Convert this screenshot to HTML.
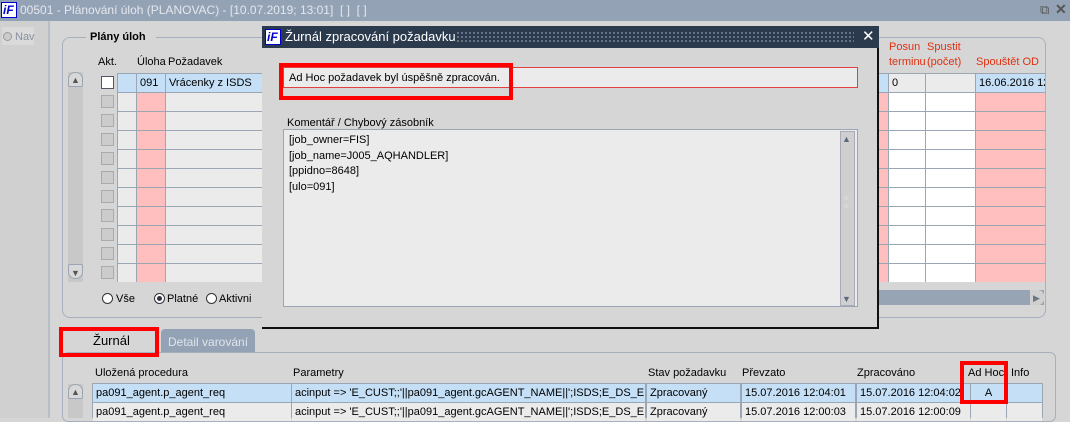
<!DOCTYPE html>
<html><head><meta charset="utf-8">
<style>
*{box-sizing:border-box;margin:0;padding:0}
body{width:1070px;height:418px;overflow:hidden;background:#d6d6d6;font-family:"Liberation Sans",Arial,sans-serif;font-size:11px;color:#000;position:relative}
.a{position:absolute}
.t{position:absolute;white-space:nowrap;line-height:14px}
.c{position:absolute;height:18px;line-height:18px;padding-left:3px;white-space:nowrap;overflow:hidden}
.row{position:absolute;left:117px;width:928px;height:19px;background:#9aa6b4}
.sb{position:absolute;width:15px;height:15px;border:1px solid #9aa6b4;border-radius:7px 7px 2px 2px;background:#d8d8d8}
.red{position:absolute;border:4px solid #f00}
</style></head><body>
<div class="a" style="left:0;top:0;width:1070px;height:21px;background:#93a2b5"></div>
<div class="a" style="left:1px;top:2px;width:16px;height:16px;background:#fff;border:1px solid #00c"><div class="t" style="left:1px;top:0;color:#00c;font-weight:bold;font-style:italic;font-size:12px">iF</div></div>
<div class="t" style="left:20px;top:3px;color:#e4e8ee;font-size:12px">00501 - Plánování úloh (PLANOVAC) - [10.07.2019; 13:01]&nbsp; [ ]&nbsp; [ ]</div>
<div class="t" style="left:1040px;top:3px;color:#555;font-size:13px">⧉</div>
<div class="t" style="left:1055px;top:2px;color:#555;font-size:14px;font-weight:bold">✕</div>
<div class="a" style="left:0;top:21px;width:50px;height:397px;background:#d0d0d0;border-right:2px solid #b8bec6"></div>
<div class="a" style="left:2px;top:27px;width:32px;height:18px;background:#dadada"></div>
<div class="a" style="left:3px;top:32px;width:9px;height:9px;border:1px solid #999;border-radius:50%;background:#ccc"></div>
<div class="t" style="left:15px;top:30px;color:#8890a0">Nav</div>
<div class="a" style="left:62px;top:37px;width:984px;height:281px;border:1px solid #a7b1bd;border-radius:8px"></div>
<div class="a" style="left:86px;top:30px;width:70px;height:14px;background:#d6d6d6"></div>
<div class="t" style="left:90px;top:30px;font-weight:bold">Plány úloh</div>
<div class="t" style="left:98px;top:55px">Akt.</div>
<div class="t" style="left:137px;top:55px">Úloha</div>
<div class="t" style="left:168px;top:55px">Požadavek</div>
<div class="t" style="left:889px;top:40px;color:#e03010">Posun</div>
<div class="t" style="left:927px;top:40px;color:#e03010">Spustit</div>
<div class="t" style="left:889px;top:55px;color:#e03010">terminu</div>
<div class="t" style="left:927px;top:55px;color:#e03010">(počet)</div>
<div class="t" style="left:976px;top:55px;color:#e03010">Spouštět OD</div>
<div class="a" style="left:68px;top:72px;width:15px;height:210px;background:#c8c8c8"></div>
<div class="sb" style="left:68px;top:72px"></div><div class="t" style="left:71px;top:73px;font-size:9px;color:#555">▲</div>
<div class="sb" style="left:68px;top:264px;border-radius:2px 2px 7px 7px"></div><div class="t" style="left:71px;top:266px;font-size:9px;color:#555">▼</div>
<div id="rows"></div>
<script>
var h='';
for(var i=0;i<11;i++){var y=73+i*19;var f=i==0;
h+='<div class="a" style="left:101px;top:'+(y+3)+'px;width:13px;height:13px;border:1px solid '+(f?'#556':'#aaa')+';background:'+(f?'#fff':'#ccc')+'"></div>';
h+='<div class="row" style="top:'+y+'px"></div>';
var cols=[[118,18,f?'#c4dff6':'#ebebeb',''],[137,28,f?'#c4dff6':'#ffbfbf',f?'091':''],[166,710,f?'#c4dff6':'#ebebeb',f?'Vrácenky z ISDS':''],[877,11,f?'#c4dff6':'#ffbfbf',''],[889,36,f?'#ebebeb':'#fff',f?'0':''],[926,49,f?'#ebebeb':'#fff',''],[976,69,f?'#c4dff6':'#ffbfbf',f?'16.06.2016 12:':'']];
for(var j=0;j<cols.length;j++){var c=cols[j];h+='<div class="c" style="left:'+c[0]+'px;top:'+(y+1)+'px;width:'+c[1]+'px;background:'+c[2]+'">'+c[3]+'</div>';}
}
document.getElementById('rows').innerHTML=h;
</script>
<div class="a" style="left:878px;top:290px;width:166px;height:15px;background:#96a4b4"></div>
<div class="a" style="left:1030px;top:290px;width:14px;height:15px;background:#d0d0d0;border-radius:0 6px 6px 0"></div>
<div class="t" style="left:1033px;top:291px;font-size:9px;color:#6a7888">▶</div>
<div class="a" style="left:102px;top:293px;width:11px;height:11px;border:1px solid #333;border-radius:50%;background:#fff"></div>
<div class="t" style="left:116px;top:292px">Vše</div>
<div class="a" style="left:154px;top:293px;width:11px;height:11px;border:1px solid #333;border-radius:50%;background:#fff"><div class="a" style="left:2px;top:2px;width:5px;height:5px;border-radius:50%;background:#334"></div></div>
<div class="t" style="left:167px;top:292px">Platné</div>
<div class="a" style="left:206px;top:293px;width:11px;height:11px;border:1px solid #333;border-radius:50%;background:#fff"></div>
<div class="t" style="left:219px;top:292px">Aktivni</div>
<div class="a" style="left:262px;top:26px;width:617px;height:303px;background:#d6d6d6;border-right:2px solid #111;border-bottom:2px solid #111"></div>
<div class="a" style="left:262px;top:26px;width:617px;height:22px;background:#2b3a4d"></div>
<div class="a" style="left:456px;top:31px;width:398px;height:12px;background-image:radial-gradient(#7a8696 0.8px,transparent 1px);background-size:4px 4px"></div>
<div class="a" style="left:265px;top:29px;width:16px;height:16px;background:#fff;border:1px solid #00c"><div class="t" style="left:1px;top:0;color:#00c;font-weight:bold;font-style:italic;font-size:12px">iF</div></div>
<div class="t" style="left:285px;top:29px;color:#fff;font-size:13px;line-height:16px">Žurnál zpracování požadavku</div>
<div class="t" style="left:862px;top:29px;color:#fff;font-size:15px;line-height:16px">✕</div>
<div class="a" style="left:283px;top:67px;width:575px;height:21px;border:1px solid #e04040;background:#ebebeb"></div>
<div class="t" style="left:289px;top:71px">Ad Hoc požadavek byl úspěšně zpracován.</div>
<div class="red" style="left:279px;top:63px;width:234px;height:37px"></div>
<div class="t" style="left:287px;top:116px">Komentář / Chybový zásobník</div>
<div class="a" style="left:283px;top:129px;width:575px;height:178px;border:1px solid #9aa6b4;background:#ebebeb"></div>
<div class="t" style="left:289px;top:133px;line-height:15.5px">[job_owner=FIS]<br>[job_name=J005_AQHANDLER]<br>[ppidno=8648]<br>[ulo=091]</div>
<div class="a" style="left:840px;top:131px;width:15px;height:175px;background:#cfcfcf;border:1px solid #aab"></div>
<div class="t" style="left:842px;top:132px;font-size:9px;color:#5a6a7e">▲</div>
<div class="t" style="left:842px;top:292px;font-size:9px;color:#5a6a7e">▼</div>
<div class="t" style="left:843px;top:195px;font-size:8px;color:#fff;line-height:8px">⁘<br>⁘</div>
<div class="a" style="left:62px;top:352px;width:994px;height:70px;border:1px solid #a7b1bd;border-radius:6px"></div>
<div class="a" style="left:161px;top:329px;width:94px;height:23px;background:#93a2b5;border-radius:4px 4px 0 0"></div>
<div class="t" style="left:168px;top:335px;color:#e0e4ea;font-size:12px">Detail varování</div>
<div class="t" style="left:93px;top:334px;font-size:13px">Žurnál</div>
<div class="red" style="left:59px;top:327px;width:100px;height:30px"></div>
<div class="t" style="left:95px;top:366px">Uložená procedura</div>
<div class="t" style="left:293px;top:366px">Parametry</div>
<div class="t" style="left:648px;top:366px">Stav požadavku</div>
<div class="t" style="left:742px;top:366px">Převzato</div>
<div class="t" style="left:857px;top:366px">Zpracováno</div>
<div class="t" style="left:968px;top:366px">Ad Hoc</div>
<div class="t" style="left:1011px;top:366px">Info</div>
<div class="a" style="left:68px;top:384px;width:15px;height:34px;background:#c8c8c8"></div>
<div class="sb" style="left:68px;top:384px"></div><div class="t" style="left:71px;top:385px;font-size:9px;color:#555">▲</div>
<div class="a" style="left:92px;top:383px;width:951px;height:35px;background:#9aa6b4"></div>
<div class="c" style="left:93px;top:384px;width:198px;background:#c4dff6">pa091_agent.p_agent_req</div>
<div class="c" style="left:292px;top:384px;width:353px;background:#c4dff6">acinput =&gt; 'E_CUST;;'||pa091_agent.gcAGENT_NAME||';ISDS;E_DS_EML;;'</div>
<div class="c" style="left:647px;top:384px;width:93px;background:#c4dff6">Zpracovaný</div>
<div class="c" style="left:742px;top:384px;width:113px;background:#c4dff6">15.07.2016 12:04:01</div>
<div class="c" style="left:857px;top:384px;width:113px;background:#c4dff6">15.07.2016 12:04:02</div>
<div class="c" style="left:971px;top:384px;width:35px;background:#c4dff6;text-align:center;padding:0">A</div>
<div class="c" style="left:1007px;top:384px;width:35px;background:#c4dff6"></div>
<div class="c" style="left:93px;top:403px;width:198px;background:#ebebeb">pa091_agent.p_agent_req</div>
<div class="c" style="left:292px;top:403px;width:353px;background:#ebebeb">acinput =&gt; 'E_CUST;;'||pa091_agent.gcAGENT_NAME||';ISDS;E_DS_EML;;'</div>
<div class="c" style="left:647px;top:403px;width:93px;background:#ebebeb">Zpracovaný</div>
<div class="c" style="left:742px;top:403px;width:113px;background:#ebebeb">15.07.2016 12:00:03</div>
<div class="c" style="left:857px;top:403px;width:113px;background:#ebebeb">15.07.2016 12:00:09</div>
<div class="c" style="left:971px;top:403px;width:35px;background:#ebebeb"></div>
<div class="c" style="left:1007px;top:403px;width:35px;background:#ebebeb"></div>
<div class="red" style="left:960px;top:361px;width:48px;height:43px"></div>
</body></html>
